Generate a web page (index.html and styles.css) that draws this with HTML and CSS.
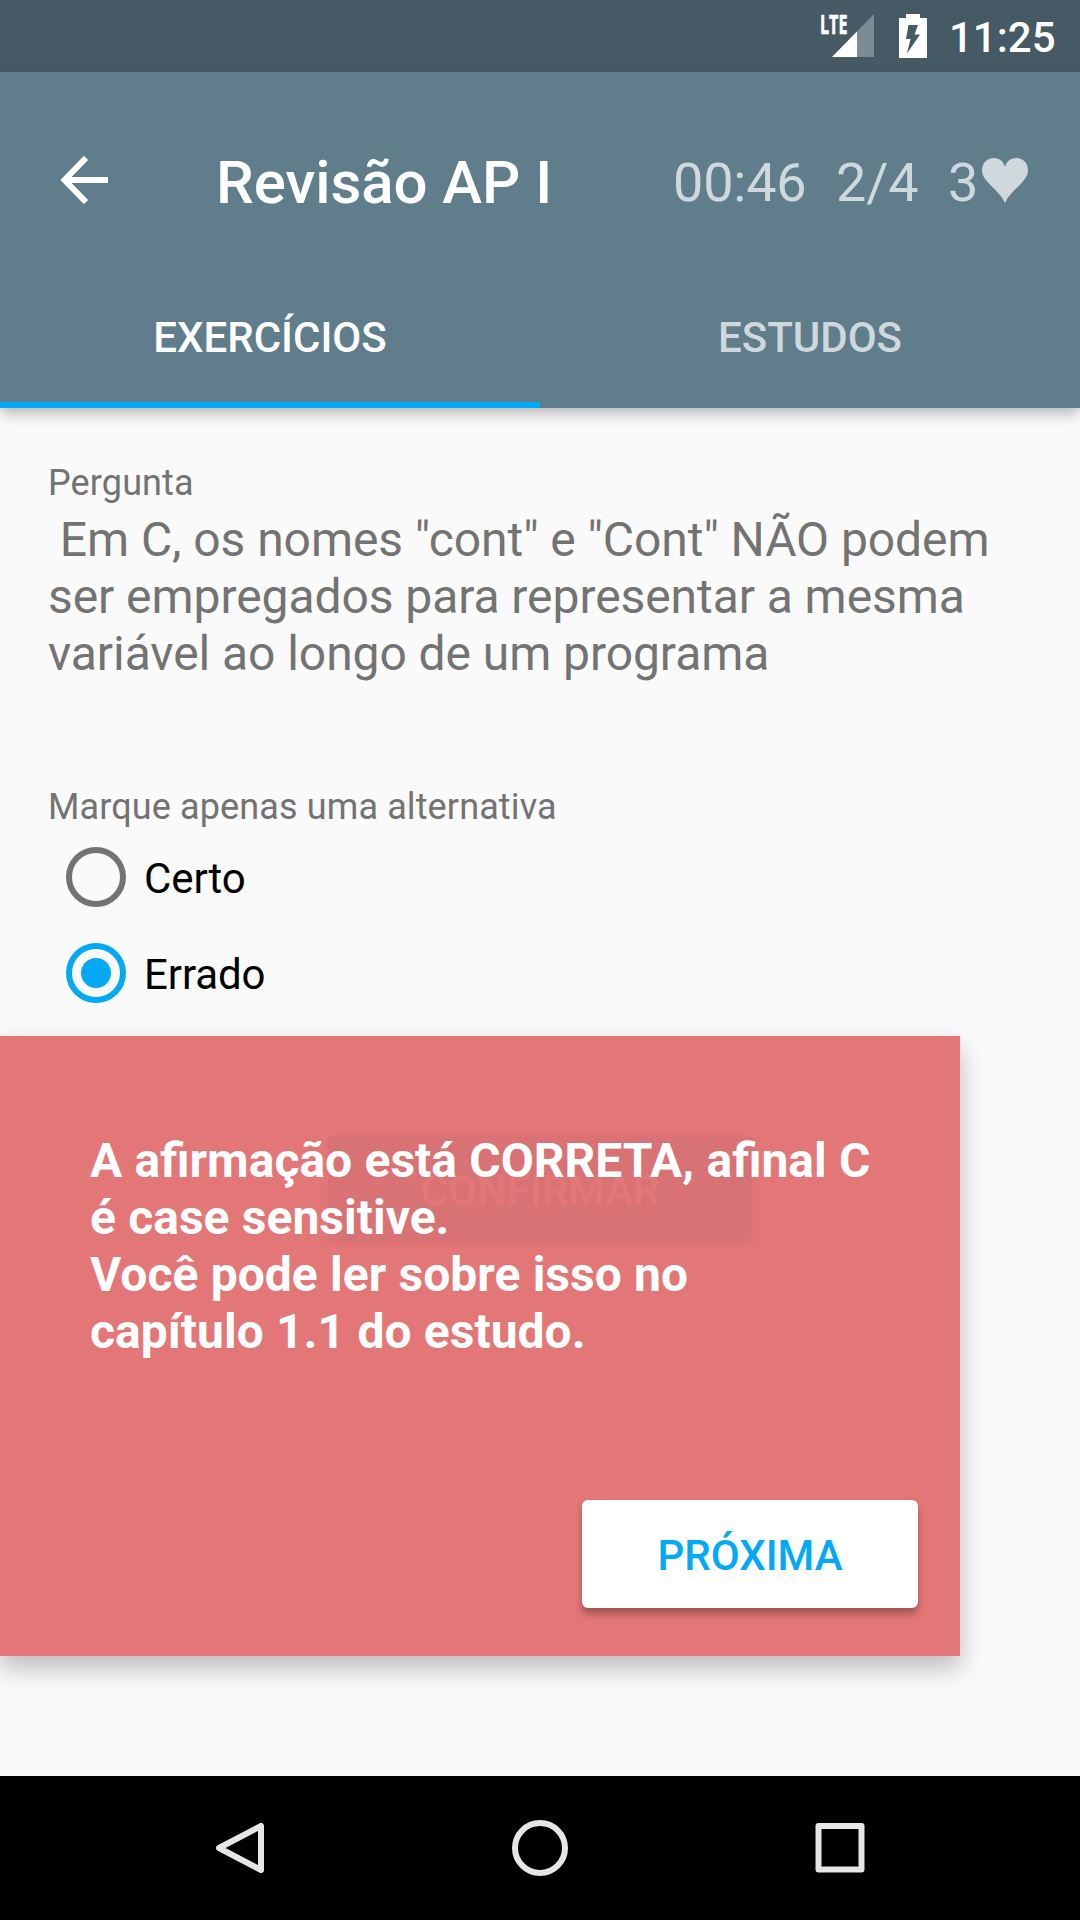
FILE: index.html
```html
<!DOCTYPE html>
<html lang="pt-BR">
<head>
<meta charset="utf-8">
<title>Revisão AP I</title>
<link rel="stylesheet" href="styles.css">
</head>
<body>
<div class="screen">
  <header class="status-bar">
    <svg class="signal" width="54" height="44" viewBox="0 0 54 44">
      <path d="M54 0V43H12Z" fill="#fff" fill-opacity=".3"/>
      <path d="M37 17.500V43H12Z" fill="#fff"/>
      <text class="signal-label" x="0" y="19.500" textLength="27.500" lengthAdjust="spacingAndGlyphs">LTE</text>
    </svg>
    <svg class="battery" width="28" height="44" viewBox="0 0 28 44">
      <path d="M7 0H21V4H28V44H0V4H7Z" fill="#fff"/>
      <path d="M9.500 11H19L15.500 20.500H21L8 39.500L11.500 25H7Z" fill="#455a64"/>
    </svg>
    <span class="clock">11:25</span>
  </header>

  <div class="app-bar">
    <div class="toolbar">
      <svg class="back" width="48" height="48" viewBox="0 0 48 48" fill="none" stroke="#fff" stroke-width="6">
        <path d="M48 24H6M26 2L4.500 24L26 46"/>
      </svg>
      <h1 class="title">Revisão AP I</h1>
      <div class="stats">
        <span class="timer">00:46</span>
        <span class="progress">2/4</span>
        <span class="lives">3</span>
        <svg class="heart" width="46" height="45" viewBox="0 0 46 45"><path d="M23 45C19.500 37 13 32 6.500 25C2 20 0 17 0 12.500C0 5 5 0 11.500 0C17 0 21.500 3 23 9C24.500 3 29 0 34.500 0C41 0 46 5 46 12.500C46 17 44 20 39.500 25C33 32 26.500 37 23 45Z" fill="#cfd8dc"/></svg>
      </div>
    </div>
    <nav class="tabs">
      <div class="tab tab-active">EXERCÍCIOS</div>
      <div class="tab">ESTUDOS</div>
    </nav>
  </div>

  <main class="content">
    <p class="label">Pergunta</p>
    <p class="question"> Em C, os nomes "cont" e "Cont" NÃO podem
ser empregados para representar a mesma
variável ao longo de um programa</p>
    <p class="label label-choices">Marque apenas uma alternativa</p>
    <div class="option"><span class="radio"></span><span class="option-text">Certo</span></div>
    <div class="option"><span class="radio radio-on"></span><span class="option-text">Errado</span></div>
    <div class="confirm">CONFIRMAR</div>

    <section class="feedback">
      <p class="feedback-text">A afirmação está CORRETA, afinal C
é case sensitive.
Você pode ler sobre isso no
capítulo 1.1 do estudo.</p>
      <div class="next">PRÓXIMA</div>
    </section>
  </main>

  <footer class="nav-bar">
    <svg width="60" height="60" viewBox="0 0 60 60" fill="none" stroke="#e6e6e6" stroke-width="6" stroke-linejoin="round"><path d="M51 6V50L9 28Z"/></svg>
    <svg width="60" height="60" viewBox="0 0 60 60" fill="none" stroke="#e6e6e6" stroke-width="6"><circle cx="30" cy="28" r="25"/></svg>
    <svg width="60" height="60" viewBox="0 0 60 60" fill="none" stroke="#e6e6e6" stroke-width="6" stroke-linejoin="round"><rect x="8.500" y="6" width="43" height="43.500"/></svg>
  </footer>
</div>
</body>
</html>
```
FILE: styles.css
```css
* { box-sizing: border-box; }
body { margin: 0; font-family: Roboto, sans-serif; background: #fafafa; }
p, h1 { margin: 0; }
svg { display: block; flex: none; }

.screen { display: flex; flex-direction: column; width: 1080px; height: 1920px; overflow: hidden; }

.status-bar { display: flex; align-items: flex-start; justify-content: flex-end; height: 72px; padding: 14px 24px 0 0; background: #455a64; color: #fff; }
.signal { margin-right: 25px; overflow: visible; }
.signal-label { font: 700 26px "Open Sans", sans-serif; fill: #fff; stroke: #fff; stroke-width: .7px; }
.battery { margin-right: 22px; }
.clock { width: 107px; font-size: 42px; font-weight: 500; line-height: 48px; }

.app-bar { position: relative; z-index: 1; height: 336px; background: #607d8b; color: #fff; box-shadow: 0 6px 12px rgba(0, 0, 0, .25); }
.toolbar { display: flex; height: 192px; padding-left: 60px; }
.back { margin-top: 84px; }
.title { width: 457px; margin: 76px 0 0 108px; font-size: 60px; font-weight: 500; line-height: 70px; letter-spacing: -.05px; white-space: nowrap; }
.stats { display: flex; margin-top: 79px; color: #cfd8dc; font-size: 54px; line-height: 64px; letter-spacing: -.2px; }
.timer { width: 163px; }
.progress { width: 112px; }
.lives { width: 34px; }
.heart { margin-top: 7px; }
.tabs { display: flex; height: 144px; }
.tab { flex: 1; padding-top: 50px; border-bottom: 6px solid transparent; text-align: center; font-size: 42px; font-weight: 500; line-height: 48px; color: #cfd8dc; }
.tab-active { color: #fff; border-bottom-color: #03a9f4; }

.content { position: relative; flex: 1; padding: 54px 48px 0; color: #737373; }
.label { font-size: 36px; line-height: 42px; letter-spacing: .12px; }
.question { margin-top: 7px; font-size: 48px; line-height: 57px; letter-spacing: -.07px; white-space: pre; }
.label-choices { margin: 104px 0 1px; }
.option { display: flex; align-items: center; gap: 18px; height: 96px; padding-left: 18px; color: #000; font-size: 42px; letter-spacing: -.1px; }
.option-text { padding-top: 2px; }
.radio { width: 60px; height: 60px; border: 6px solid #737373; border-radius: 50%; }
.radio-on { border-color: #03a9f4; background: radial-gradient(circle, #03a9f4 14.5px, transparent 15.5px); }
.confirm { width: 424px; height: 108px; margin: 114px auto 0; border-radius: 6px; background: #90d8e8; color: #fff; text-align: center; font-size: 42px; font-weight: 500; line-height: 112px; box-shadow: 0 3px 6px rgba(0, 0, 0, .15); }

.feedback { position: absolute; left: 0; top: 628px; display: flex; flex-direction: column; align-items: flex-end; justify-content: space-between; width: 960px; height: 620px; padding: 96px 42px 48px 90px; background: rgba(224, 103, 103, .9); box-shadow: 0 12px 24px rgba(0, 0, 0, .25); }
.feedback-text { align-self: flex-start; color: #fff; font-size: 48px; font-weight: 700; line-height: 57px; word-spacing: .4px; white-space: pre; }
.next { width: 336px; height: 108px; border-radius: 6px; background: #fff; color: #03a9f4; text-align: center; font-size: 42px; font-weight: 500; line-height: 111px; box-shadow: 0 6px 7px rgba(0, 0, 0, .28); }

.nav-bar { display: flex; justify-content: center; gap: 240px; height: 144px; padding-top: 44px; background: #000; }
```
